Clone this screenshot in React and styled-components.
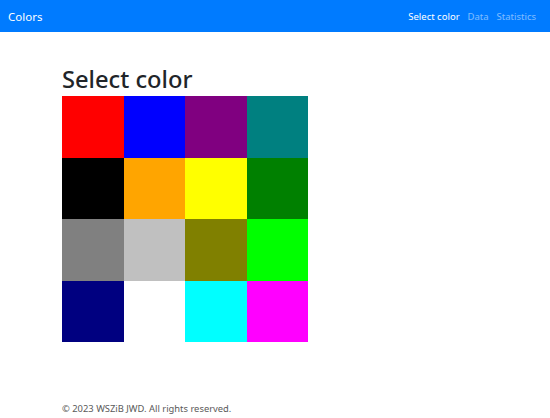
import React from 'react'
import styled, { createGlobalStyle } from 'styled-components'

const Global = createGlobalStyle`
    * { box-sizing: border-box; }
    body {
        margin: 0;
        font-family: "Noto Sans", "Open Sans", sans-serif;
        background: #fff;
        color: #212529;
    }
`

const Nav = styled.nav`
    height: 32px;
    background: #007bff;
    display: flex;
    align-items: center;
    justify-content: space-between;
    padding: 0 14px 0 8px;
`

const Brand = styled.span`
    color: #fff;
    font-size: 11.5px;
`

const Links = styled.div`
    display: flex;
    gap: 8px;
`

const Link = styled.span`
    font-size: 9.5px;
    color: ${p => (p.active ? '#fff' : 'rgba(255,255,255,0.5)')};
`

const Main = styled.main`
    padding: 32px 62px 0;
    height: 369px;
`

const Title = styled.h2`
    margin: 0 0 2px;
    font-size: 23.7px;
    font-weight: 500;
    line-height: 30px;
`

const Grid = styled.div`
    display: grid;
    grid-template-columns: repeat(4, 61.5px);
    grid-auto-rows: 61.5px;
`

const Swatch = styled.div`
    background: ${p => p.color};
`

const Footer = styled.footer`
    padding-left: 62px;
    font-size: 9.4px;
    line-height: 15px;
    color: #5a5a5a;
`

const colors = [
    'red', 'blue', 'purple', 'teal',
    'black', 'orange', 'yellow', 'green',
    'gray', 'silver', 'olive', 'lime',
    'navy', 'white', 'aqua', 'fuchsia',
]

const App = () => {
    return (
        <React.Fragment>
            <Global />
            <Nav>
                <Brand>Colors</Brand>
                <Links>
                    <Link active>Select color</Link>
                    <Link>Data</Link>
                    <Link>Statistics</Link>
                </Links>
            </Nav>
            <Main>
                <Title>Select color</Title>
                <Grid>
                    {colors.map(c => <Swatch key={c} color={c} />)}
                </Grid>
            </Main>
            <Footer>© 2023 WSZiB JWD. All rights reserved.</Footer>
        </React.Fragment>
    )
}

export default App
